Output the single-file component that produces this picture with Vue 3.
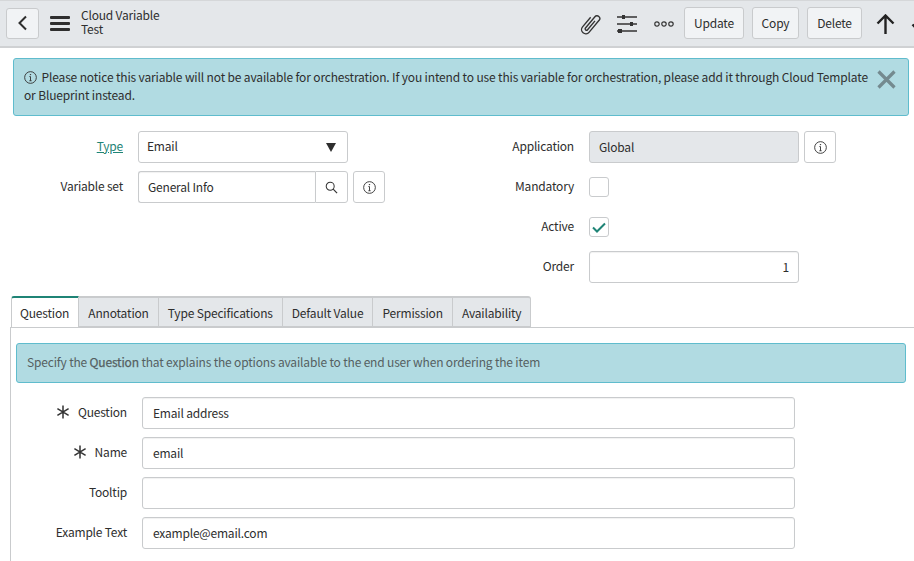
<script setup>
import { ref } from 'vue'

const tabs = ['Question', 'Annotation', 'Type Specifications', 'Default Value', 'Permission', 'Availability']
const active = ref(true)
const mandatory = ref(false)
const questionRows = ref([
  { label: 'Question', value: 'Email address', required: true },
  { label: 'Name', value: 'email', required: true },
  { label: 'Tooltip', value: '', required: false },
  { label: 'Example Text', value: 'example@email.com', required: false },
])
</script>

<template>
  <div class="page">
    <header class="toolbar">
      <button class="back">
        <svg width="12" height="16" viewBox="0 0 12 16"><path d="M9 1.500 2.500 8 9 14.500" fill="none" stroke="#2e2e2e" stroke-width="2"/></svg>
      </button>
      <div class="burger"><span></span><span></span><span></span></div>
      <div class="title">
        <div>Cloud Variable</div>
        <div>Test</div>
      </div>
      <div class="tools">
        <svg class="clip" width="21" height="22" viewBox="-10 -10 20 20"><path transform="rotate(40)" d="M-4 -5V7a4 4 0 0 0 8 0V-8a2.600 2.600 0 0 0-5.200 0V6a1.300 1.300 0 0 0 2.600 0V-5" fill="none" stroke="#333" stroke-width="1.300"/></svg>
        <svg class="sliders" width="20" height="20" viewBox="0 0 20 20"><path d="M0 3h20M0 10h20M0 17h20" stroke="#333" stroke-width="1.300"/><rect x="5" y="1" width="3" height="4" fill="#333"/><rect x="13" y="8" width="3" height="4" fill="#333"/><rect x="1" y="15" width="4" height="4" fill="#333"/></svg>
        <svg class="dots" width="20" height="6" viewBox="0 0 20 6"><circle cx="3" cy="3" r="2.200" fill="none" stroke="#333" stroke-width="1.200"/><circle cx="10" cy="3" r="2.200" fill="none" stroke="#333" stroke-width="1.200"/><circle cx="17" cy="3" r="2.200" fill="none" stroke="#333" stroke-width="1.200"/></svg>
        <button class="btn update">Update</button>
        <button class="btn copy">Copy</button>
        <button class="btn delete">Delete</button>
        <svg class="arrow" width="19" height="20" viewBox="0 0 19 20"><path d="M9.500 20V2M1.500 9.500 9.500 1.500l8 8" fill="none" stroke="#222" stroke-width="2.400"/></svg>
        <svg class="arrow down" width="19" height="20" viewBox="0 0 19 20"><path d="M9.500 0v18M1.500 10.500l8 8 8-8" fill="none" stroke="#222" stroke-width="2.400"/></svg>
      </div>
    </header>

    <div class="alert top-alert">
      <div class="alert-text">
        <svg class="info small" width="13" height="13" viewBox="0 0 14 14"><circle cx="7" cy="7" r="6.300" fill="none" stroke="#333" stroke-width="1"/><path d="M7 6v4.500M5.800 10.500h2.400M5.800 6H7" fill="none" stroke="#333"/><circle cx="7" cy="3.900" r=".8" fill="#333"/></svg>
        Please notice this variable will not be available for orchestration. If you intend to use this variable for orchestration, please add it through Cloud Template or Blueprint instead.
      </div>
      <svg class="close" width="19" height="19" viewBox="0 0 19 19"><path d="M1.500 1.500l16 16M17.500 1.500l-16 16" stroke="#748a8f" stroke-width="3.200"/></svg>
    </div>

    <section class="form">
      <div class="col left">
        <div class="row">
          <label class="lbl"><a class="link">Type</a></label>
          <div class="select">
            <span>Email</span>
            <i class="caret"></i>
          </div>
        </div>
        <div class="row">
          <label class="lbl">Variable set</label>
          <div class="lookup">
            <input class="input" value="General Info" />
            <span class="search">
              <svg width="13" height="13" viewBox="0 0 14 14"><circle cx="5.600" cy="5.600" r="4.300" fill="none" stroke="#333" stroke-width="1.100"/><path d="M8.800 8.800 13 13" stroke="#333" stroke-width="1.300"/></svg>
            </span>
          </div>
          <button class="icon-btn">
            <svg width="13" height="13" viewBox="0 0 14 14"><circle cx="7" cy="7" r="6.300" fill="none" stroke="#333" stroke-width="1"/><path d="M7 6v4.500M5.800 10.500h2.400M5.800 6H7" fill="none" stroke="#333"/><circle cx="7" cy="3.900" r=".8" fill="#333"/></svg>
          </button>
        </div>
      </div>
      <div class="col right">
        <div class="row">
          <label class="lbl">Application</label>
          <input class="input readonly" value="Global" readonly />
          <button class="icon-btn">
            <svg width="13" height="13" viewBox="0 0 14 14"><circle cx="7" cy="7" r="6.300" fill="none" stroke="#333" stroke-width="1"/><path d="M7 6v4.500M5.800 10.500h2.400M5.800 6H7" fill="none" stroke="#333"/><circle cx="7" cy="3.900" r=".8" fill="#333"/></svg>
          </button>
        </div>
        <div class="row">
          <label class="lbl">Mandatory</label>
          <span class="check" @click="mandatory = !mandatory">
            <svg v-if="mandatory" width="14" height="11" viewBox="0 0 14 11"><path d="M1 5.500 5 9.500 13 1.500" fill="none" stroke="#1f8476" stroke-width="2"/></svg>
          </span>
        </div>
        <div class="row">
          <label class="lbl">Active</label>
          <span class="check" @click="active = !active">
            <svg v-if="active" width="14" height="11" viewBox="0 0 14 11"><path d="M1 5.500 5 9.500 13 1.500" fill="none" stroke="#1f8476" stroke-width="2"/></svg>
          </span>
        </div>
        <div class="row">
          <label class="lbl">Order</label>
          <input class="input order" value="1" />
        </div>
      </div>
    </section>

    <nav class="tabs">
      <div v-for="(t, i) in tabs" :key="t" class="tab" :class="{ current: i === 0 }">{{ t }}</div>
    </nav>

    <section class="panel">
      <div class="alert hint"><span>Specify the <b>Question</b> that explains the options available to the end user when ordering the item</span></div>
      <div v-for="r in questionRows" :key="r.label" class="q-row">
        <label class="q-lbl">
          <svg v-if="r.required" class="star" width="14" height="14" viewBox="0 0 14 14"><path d="M7 .5v13M1.400 3.700l11.200 6.600M12.600 3.700 1.400 10.300" stroke="#333" stroke-width="1.500"/></svg>
          {{ r.label }}
        </label>
        <input class="input q-input" v-model="r.value" />
      </div>
    </section>
  </div>
</template>

<style scoped>
.page { width:914px; height:561px; overflow:hidden; background:#fff; color:#2e2e2e; font-family:"Noto Sans CJK SC","Source Sans Pro","Noto Sans",sans-serif; font-size:12px; letter-spacing:-.2px; }
.toolbar { height:48px; box-sizing:border-box; display:flex; align-items:center; background:#e4e7ea; border-top:1px solid #d5d7d9; border-bottom:2px solid #cfd1d3; padding-left:6px; }
.back { width:33px; height:31px; margin-top:-1px; padding:0; background:#f1f3f5; border:1px solid #c9cbcd; border-radius:3px; display:flex; align-items:center; justify-content:center; }
.burger { width:20px; margin-left:11px; display:flex; flex-direction:column; gap:3px; }
.burger span { display:block; height:3px; background:#2e2e2e; border-radius:1px; }
.title { margin-left:11px; line-height:14px; margin-top:-4px; }
.tools { margin-left:auto; display:flex; align-items:center; flex:none; width:334px; overflow:hidden; height:45px; }
.tools > * { flex:none; }
.sliders { margin-left:16px; }
.dots { margin-left:17px; }
.btn { height:32px; margin-top:-2px; box-sizing:border-box; padding:0; background:#f1f3f5; border:1px solid #c9cbcd; border-radius:3px; font:inherit; letter-spacing:inherit; color:#2e2e2e; }
.update { width:60px; margin-left:10px; }
.copy { width:47px; margin-left:8px; }
.delete { width:55px; margin-left:8px; }
.arrow { margin-left:14px; }
.arrow.down { margin-left:16px; }

.alert { box-sizing:border-box; background:#b1dbe2; border:1px solid #5fbccd; border-radius:3px; }
.top-alert { margin:10px 5px 0 13px; height:58px; padding:9px 12px 0 10px; display:flex; justify-content:space-between; }
.alert-text { width:846px; line-height:18px; letter-spacing:-.15px; }
.info.small { vertical-align:-2px; margin-right:2px; }
.close { flex:none; margin-top:2px; }

.form { display:flex; margin-top:15px; }
.col .row { display:flex; align-items:center; }
.left { width:385px; }
.left .row { height:32px; margin-bottom:8px; }
.left .lbl { width:123px; margin-right:15px; }
.right { margin-left:auto; width:529px; }
.right .row { height:32px; margin-bottom:8px; }
.right .lbl { width:189px; margin-right:15px; }
.lbl { text-align:right; flex:none; line-height:18px; margin-top:-2px; }
.link { color:#1f8476; text-decoration:underline; }
.input { box-sizing:border-box; height:32px; border:1px solid #c9cbcd; border-radius:3px; padding:0 9px 2px; font:inherit; letter-spacing:inherit; color:#2e2e2e; outline:none; background:#fff; box-shadow:inset 0 1px 1px rgba(0,0,0,.06); }
.select { box-sizing:border-box; width:210px; height:32px; border:1px solid #c9cbcd; border-radius:3px; display:flex; align-items:center; justify-content:space-between; padding:0 11px 0 8px; }
.select span { margin-top:-3px; }
.caret { width:0; height:0; border-left:5.500px solid transparent; border-right:5.500px solid transparent; border-top:9px solid #2e2e2e; }
.lookup { width:210px; height:32px; display:flex; }
.lookup .input { width:177px; border-radius:3px 0 0 3px; border-right:0; }
.search { box-sizing:border-box; width:33px; height:32px; border:1px solid #c9cbcd; border-radius:0 3px 3px 0; display:flex; align-items:center; justify-content:center; }
.icon-btn { box-sizing:border-box; width:32px; height:32px; margin-left:5px; padding:0; background:#fff; border:1px solid #c9cbcd; border-radius:3px; display:flex; align-items:center; justify-content:center; }
.readonly { width:210px; background:#e4e7ea; box-shadow:none; }
.check { box-sizing:border-box; width:20px; height:20px; border:1px solid #c9cbcd; border-radius:3px; display:flex; align-items:center; justify-content:center; }
.order { width:210px; text-align:right; }

.tabs { display:flex; margin:5px 0 0 11px; height:31px; letter-spacing:-.17px; }
.tab { box-sizing:border-box; padding:0 9px; display:flex; align-items:center; background:#e4e7ea; border-top:2px solid #c9cbcd; border-right:1px solid #c9cbcd; border-bottom:1px solid #c9cbcd; white-space:nowrap; }
.tab.current { background:#fff; border-top:2px solid #1f8476; border-bottom:0; border-left:1px solid #c9cbcd; border-radius:3px 0 0 0; padding-left:8px; }
.tab:last-child { border-radius:0 3px 0 0; }
.panel { margin-left:10px; border-left:1px solid #c9cbcd; border-top:1px solid #c9cbcd; padding:15px 0 30px 5px; }
.hint { width:890px; height:40px; padding:0 10px 3px; display:flex; align-items:center; color:#555f61; letter-spacing:-.17px; }
.hint b { font-weight:400; -webkit-text-stroke:.25px #555f61; }
.q-row { display:flex; align-items:center; height:32px; margin-bottom:8px; }
.hint + .q-row { margin-top:14px; }
.q-lbl { box-sizing:border-box; width:111px; margin-right:15px; display:flex; justify-content:flex-end; align-items:center; gap:8px; line-height:18px; margin-top:-2px; }
.q-input { width:653px; padding:0 10px 2px; }
</style>
